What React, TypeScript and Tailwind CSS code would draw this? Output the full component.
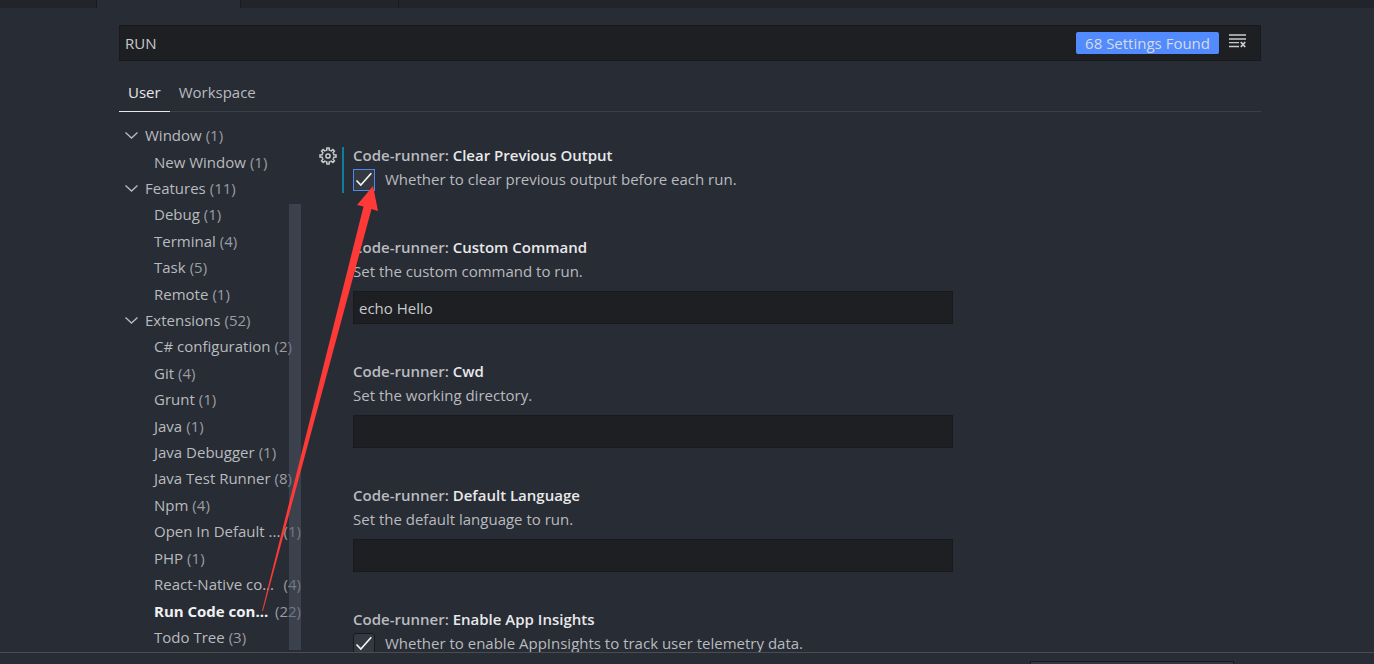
import { useState } from "react";

type TreeNode = { label: string; count: number; group?: boolean; active?: boolean; shortened?: boolean };

const tree: TreeNode[] = [
  { label: "Window", count: 1, group: true },
  { label: "New Window", count: 1 },
  { label: "Features", count: 11, group: true },
  { label: "Debug", count: 1 },
  { label: "Terminal", count: 4 },
  { label: "Task", count: 5 },
  { label: "Remote", count: 1 },
  { label: "Extensions", count: 52, group: true },
  { label: "C# configuration", count: 2 },
  { label: "Git", count: 4 },
  { label: "Grunt", count: 1 },
  { label: "Java", count: 1 },
  { label: "Java Debugger", count: 1 },
  { label: "Java Test Runner", count: 8 },
  { label: "Npm", count: 4 },
  { label: "Open In Default ...", count: 1, shortened: true },
  { label: "PHP", count: 1 },
  { label: "React-Native co...", count: 4, shortened: true },
  { label: "Run Code con...", count: 22, active: true, shortened: true },
  { label: "Todo Tree", count: 3 },
];

function Chevron() {
  return (
    <svg className="mr-1.5 w-4 shrink-0" viewBox="0 0 16 16" height="16" fill="none" stroke="#b9bcc2" strokeWidth="1.3" aria-hidden="true">
      <path d="M2.5 5.5 L8.5 11 L14.5 5.5" />
    </svg>
  );
}

function Gear() {
  const teeth = [0, 45, 90, 135, 180, 225, 270, 315];
  return (
    <svg viewBox="0 0 18 18" width="18" height="18" fill="none" stroke="#c8cacd" strokeWidth="1.5" aria-hidden="true">
      {teeth.map((angle) => (
        <path
          key={angle}
          transform={`rotate(${angle} 9 9)`}
          d="M6.7 3.45 L7.7 3.1 L7.9 1 H10.1 L10.3 3.1 L11.3 3.45"
        />
      ))}
      <circle cx="9" cy="9" r="2.1" />
    </svg>
  );
}

function ClearIcon() {
  return (
    <svg viewBox="0 0 18 14" width="18" height="14" fill="none" stroke="#c8cacd" strokeWidth="1.3" aria-hidden="true">
      <path d="M0 1 H17 M0 5 H17 M0 8.7 H10 M0 12.5 H10" />
      <path d="M11.8 8 L16.2 13 M16.2 8 L11.8 13" strokeWidth="1.8" />
    </svg>
  );
}

function Title({ name }: { name: string }) {
  return (
    <h3 className="h-6 leading-6 font-semibold whitespace-nowrap text-[#b9bbbf]">
      Code-runner: <span className="text-[#e8e9eb]">{name}</span>
    </h3>
  );
}

function CheckSetting({ id, name, text, focused }: { id: string; name: string; text: string; focused?: boolean }) {
  const [on, setOn] = useState(true);
  return (
    <section className="flex pb-11">
      <div className="flex w-[23px] shrink-0 pt-1">
        {focused && (
          <button type="button" aria-label="More actions" className="h-[18px] w-[18px]">
            <Gear />
          </button>
        )}
      </div>
      <div className={`mt-1 -mb-0.5 w-[11px] shrink-0 ${focused ? "border-l-2 border-[#0c7d9d]" : ""}`} />
      <div className="min-w-0">
        <Title name={name} />
        <label htmlFor={id} className="flex h-6 items-start whitespace-nowrap">
          <span className="mt-0.5 mr-2.5 grid h-[22px] w-[22px] shrink-0">
            <input
              id={id}
              type="checkbox"
              checked={on}
              onChange={() => setOn(!on)}
              className={`col-start-1 row-start-1 h-[22px] w-[22px] appearance-none border bg-[#343841] outline-none ${focused ? "border-[#4d86f5]" : "rounded-[3px] border-[#181a1f]"}`}
            />
            {on && (
              <svg viewBox="0 0 22 22" className="pointer-events-none col-start-1 row-start-1" fill="none" stroke="#f2f3f4" strokeWidth="1.7" aria-hidden="true">
                <path d="M3.5 11.5 L7.8 16 L18.3 4.2" />
              </svg>
            )}
          </span>
          {text}
        </label>
      </div>
    </section>
  );
}

function TextSetting({ id, name, text, value }: { id: string; name: string; text: string; value?: string }) {
  return (
    <section className="pb-[34px] pl-[34px]">
      <Title name={name} />
      <label htmlFor={id} className="block h-6 leading-6 whitespace-nowrap">
        {text}
      </label>
      <input
        id={id}
        type="text"
        defaultValue={value}
        className="mt-2 mb-px block h-[33px] w-full max-w-[600px] border border-[#181a1f] bg-[#1d1f23] px-[5px] text-[#c8cacd] outline-none"
      />
    </section>
  );
}

export default function App() {
  return (
    <div className="relative flex h-screen flex-col overflow-hidden bg-[#282c34] font-['Open_Sans','Noto_Sans',sans-serif] text-[15px] leading-6 text-[#b9bbbf]">
      <div className="flex h-2 shrink-0 bg-[#21252b]" aria-hidden="true">
        <div className="w-[97px] border-r border-[#181a1f]" />
        <div className="w-36 border-r border-[#181a1f] bg-[#282c34]" />
        <div className="w-[158px] border-r border-[#181a1f]" />
      </div>

      <div className="flex min-h-0 flex-1 flex-col pt-[17px] pr-[113px] pl-[119px]">
        <header className="flex h-9 shrink-0 items-center border border-[#181a1f] bg-[#1d1f23] pr-[13px] pl-[5px]">
          <input
            type="text"
            aria-label="Search settings"
            defaultValue="RUN"
            className="h-full min-w-0 flex-1 bg-transparent text-[#c8cacd] outline-none"
          />
          <span className="mr-2.5 flex h-[22px] items-center rounded-xs bg-[#528bff] px-[9px] whitespace-nowrap text-[#d7dae0]">
            68 Settings Found
          </span>
          <button type="button" aria-label="Clear settings search input" className="flex h-[18px] items-start">
            <ClearIcon />
          </button>
        </header>

        <nav className="mt-3 flex h-[39px] shrink-0 border-b border-[#3c3f43]">
          <button type="button" className="-mb-px border-b border-[#e7e7e7] px-[9px] text-[#e7e7e7]">
            User
          </button>
          <button type="button" className="px-[9px]">
            Workspace
          </button>
        </nav>

        <main className="flex min-h-0 flex-1 overflow-hidden">
          <aside className="relative w-[182px] shrink-0 pt-2.5 pb-0.5">
            <ul className="flex h-full flex-col">
              {tree.map((node) => (
                <li
                  key={node.label}
                  className={`flex min-h-0 flex-1 items-center whitespace-nowrap ${node.group ? "pl-1" : "pl-[35px]"}`}
                >
                  {node.group && <Chevron />}
                  <span className={node.active ? "font-bold text-[#f0f1f2]" : ""}>{node.label}</span>
                  <span className={`shrink-0 text-[#9a9da3] ${node.shortened ? "ml-auto" : "ml-1"}`}>({node.count})</span>
                </li>
              ))}
            </ul>
            <div className="absolute top-[92px] right-0 bottom-0.5 w-3 bg-[#4e5666]/50" />
          </aside>

          <div className="ml-[18px] min-w-0 flex-1 overflow-hidden pt-[31px]">
            <CheckSetting
              id="clear-output"
              name="Clear Previous Output"
              text="Whether to clear previous output before each run."
              focused
            />
            <TextSetting id="custom-command" name="Custom Command" text="Set the custom command to run." value="echo Hello" />
            <TextSetting id="cwd" name="Cwd" text="Set the working directory." />
            <TextSetting id="default-language" name="Default Language" text="Set the default language to run." />
            <CheckSetting
              id="app-insights"
              name="Enable App Insights"
              text="Whether to enable AppInsights to track user telemetry data."
            />
          </div>
        </main>
      </div>

      <footer className="flex h-3 shrink-0 items-end justify-end border-t border-[#4a4c51] bg-[#282c34] pr-[140px]">
        <div className="h-[3px] w-[204px] border-x border-t border-[#181a1f] bg-[#343841]" />
      </footer>

      <svg className="pointer-events-none absolute top-0 left-0" width="400" height="640" viewBox="0 0 400 640" aria-hidden="true">
        <path d="M262 611 L363.5 206.5 L357 205 L373 186 L378 211 L371.5 209 L263 611 Z" fill="#fd3a38" />
      </svg>
    </div>
  );
}
